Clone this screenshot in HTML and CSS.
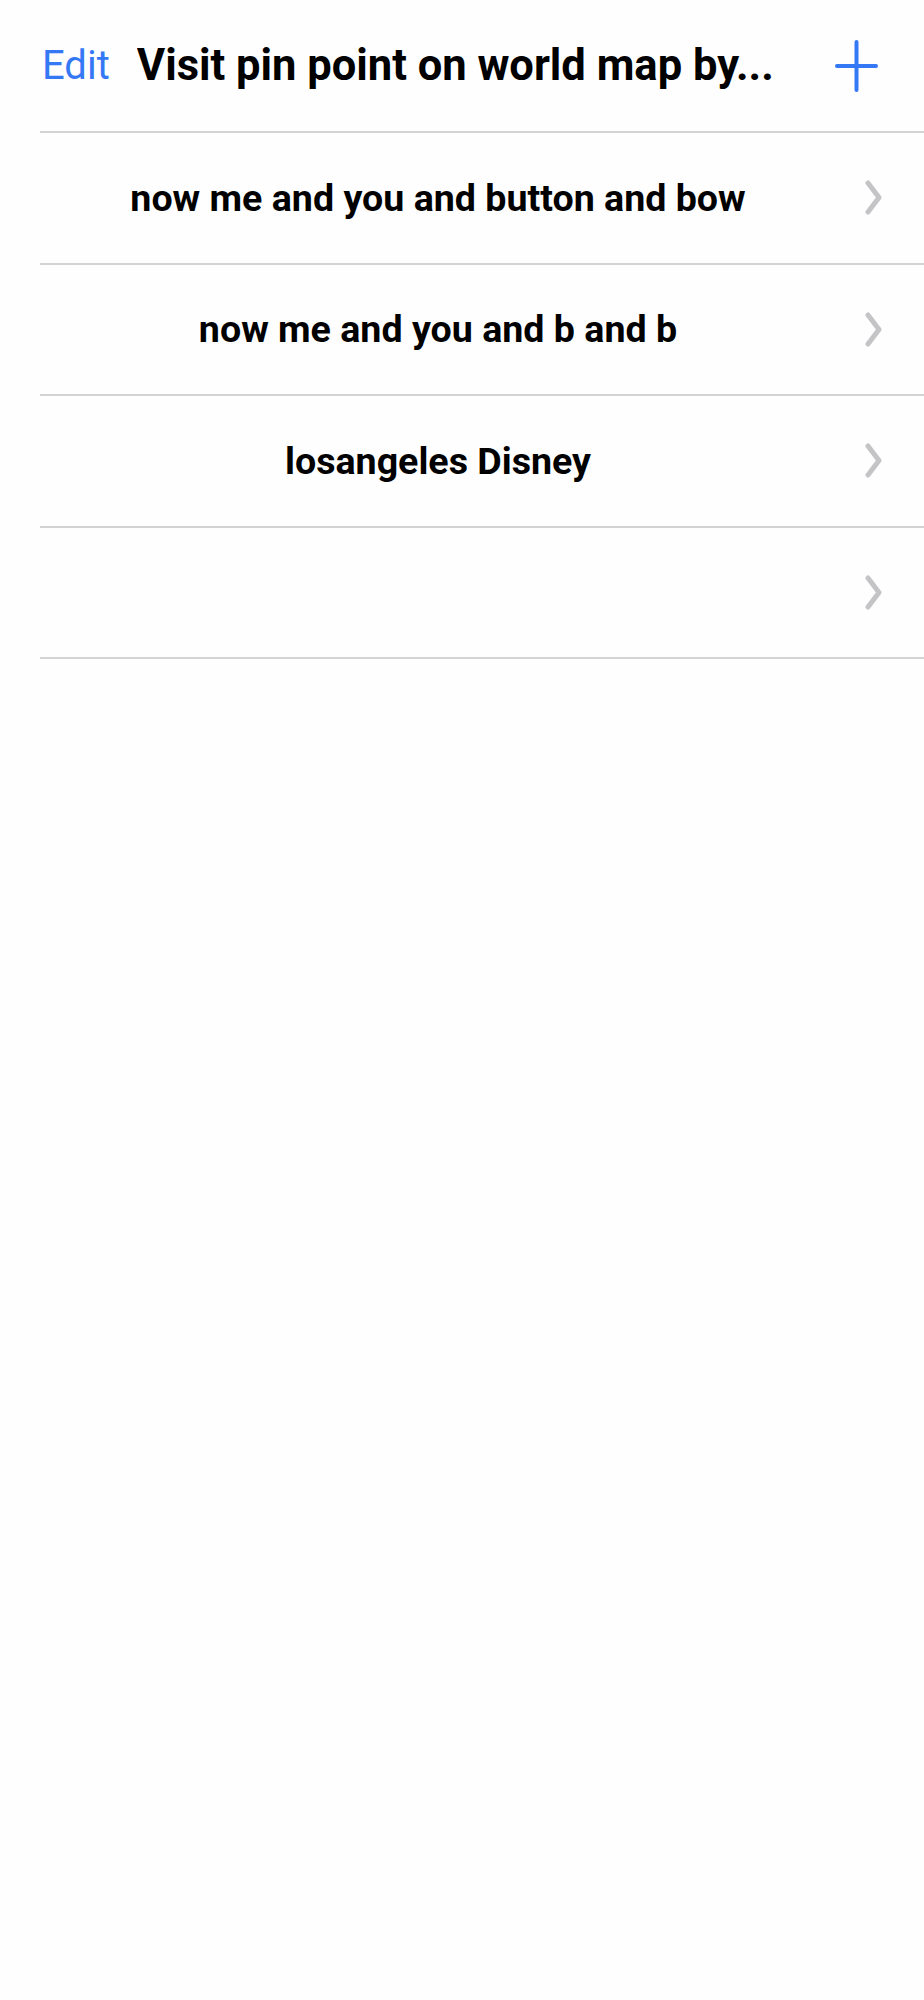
FILE: index.html
```html
<!DOCTYPE html>
<html lang="en">
<head>
  <meta charset="UTF-8">
  <meta name="viewport" content="width=device-width, initial-scale=1.0">
  <title>Visit pin point on world map</title>
  <link rel="stylesheet" href="styles.css">
</head>
<body>
<div class="nav-bar">
  <span class="nav-edit">Edit</span>
  <span class="nav-title">Visit pin point on world map by...</span>
  <span class="nav-add">
    <svg width="43" height="52" viewBox="0 0 43 52"><path d="M21.5 2 V50 M2 26 H41" stroke="#3478f6" stroke-width="4" stroke-linecap="round" fill="none"/></svg>
  </span>
</div>

<div class="list">
  <div class="row">
    <span class="row-label">now me and you and button and bow</span>
    <svg class="chevron" width="17" height="35" viewBox="0 0 17 35"><path d="M3 3 L14 17.5 L3 32" stroke="#c4c4c7" stroke-width="5" stroke-linecap="round" stroke-linejoin="round" fill="none"/></svg>
  </div>
  <div class="row">
    <span class="row-label">now me and you and b and b</span>
    <svg class="chevron" width="17" height="35" viewBox="0 0 17 35"><path d="M3 3 L14 17.5 L3 32" stroke="#c4c4c7" stroke-width="5" stroke-linecap="round" stroke-linejoin="round" fill="none"/></svg>
  </div>
  <div class="row">
    <span class="row-label">losangeles Disney</span>
    <svg class="chevron" width="17" height="35" viewBox="0 0 17 35"><path d="M3 3 L14 17.5 L3 32" stroke="#c4c4c7" stroke-width="5" stroke-linecap="round" stroke-linejoin="round" fill="none"/></svg>
  </div>
  <div class="row">
    <span class="row-label"></span>
    <svg class="chevron" width="17" height="35" viewBox="0 0 17 35"><path d="M3 3 L14 17.5 L3 32" stroke="#c4c4c7" stroke-width="5" stroke-linecap="round" stroke-linejoin="round" fill="none"/></svg>
  </div>
</div>
</body>
</html>
```

FILE: styles.css
```css
body {
  margin: 0;
  background-color: #fefefe;
  color: #000;
  font-family: Roboto, "Liberation Sans", sans-serif;
}

.nav-bar {
  display: flex;
  align-items: center;
  height: 131px;
  padding: 0 46px 0 42px;
}

.nav-edit {
  font-size: 40px;
  color: #3478f6;
  margin-right: 27px;
}

.nav-title {
  flex: 1;
  font-size: 43.5px;
  font-weight: 700;
  white-space: nowrap;
  overflow: hidden;
}

.nav-add svg {
  display: block;
}

.list {
  margin-left: 40px;
  border-top: 2px solid #d3d3d5;
}

.row {
  display: flex;
  align-items: center;
  box-sizing: border-box;
  height: 131.5px;
  padding-right: 42px;
  border-bottom: 2px solid #d3d3d5;
}

.row-label {
  flex: 1;
  text-align: center;
  font-size: 37.6px;
  font-weight: 700;
}

.chevron {
  display: block;
  margin-left: 29px;
}
```
